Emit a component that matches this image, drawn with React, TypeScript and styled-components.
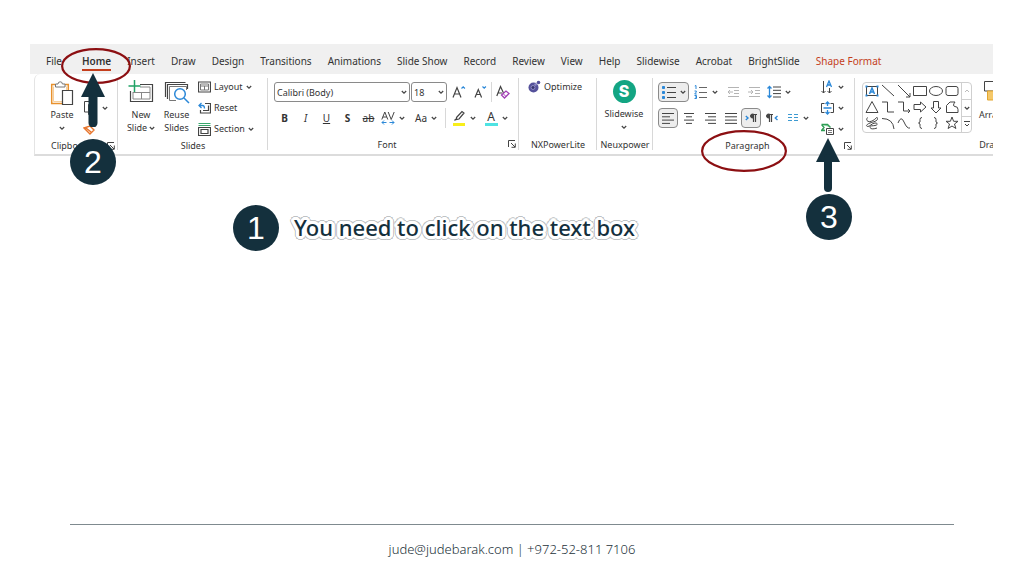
import React from "react";
import styled, { createGlobalStyle, css } from "styled-components";

const INK = "#444444";
const BLUE = "#2b88d8";
const NAVY = "#14303d";

const GlobalStyle = createGlobalStyle`
  *, *::before, *::after { box-sizing: border-box; }
  body {
    margin: 0;
    background: #ffffff;
    color: #333333;
    font-family: "Noto Sans", "Open Sans", sans-serif;
    font-size: 9px;
  }
  button, select { font: inherit; color: inherit; }
  svg { display: block; flex: none; }
`;

const Slide = styled.div`
  display: flex;
  flex-direction: column;
  min-height: 100vh;
  padding: 44px 0 16px;
`;

const Ribbon = styled.section`
  position: relative;
  margin: 0 31px 0 30px;
`;

const TabBar = styled.nav`
  display: flex;
  align-items: center;
  gap: 16px;
  height: 30px;
  padding: 4px 16px 0;
  background: #f0f0f0;
  overflow: hidden;
`;

const Tab = styled.button<{ $active?: boolean; $accent?: boolean }>`
  flex: none;
  height: 20px;
  padding: 2px 0 0;
  border: 0;
  border-bottom: 2px solid ${(p) => (p.$active ? "#c43e1c" : "transparent")};
  background: none;
  font-size: 10px;
  line-height: 16px;
  white-space: nowrap;
  color: ${(p) => (p.$accent ? "#c43e1c" : "#333333")};
  ${(p) =>
    p.$active &&
    css`
      margin-left: 4px;
      font-weight: 600;
    `}
`;

const Panel = styled.div`
  display: flex;
  height: 82px;
  margin-left: 4px;
  border: 1px solid #e4e4e4;
  border-width: 0 0 2px 1px;
  border-bottom-color: #dcdcdc;
  border-radius: 6px 0 0 0;
  background: #ffffff;
  overflow: hidden;
`;

const GroupBox = styled.div<{ $width: number }>`
  display: flex;
  flex: none;
  flex-direction: column;
  justify-content: space-between;
  width: ${(p) => p.$width}px;
  padding-bottom: 2px;
  position: relative;
  &:not(:last-child)::after {
    content: "";
    position: absolute;
    right: 0;
    top: 4px;
    bottom: 4px;
    width: 1px;
    background: #d8d8d8;
  }
`;

const GroupContent = styled.div<{ $pad?: number }>`
  display: flex;
  align-items: flex-start;
  padding: 2px 0 0 ${(p) => p.$pad ?? 0}px;
`;

const GroupFooter = styled.div<{ $start?: boolean }>`
  display: flex;
  align-items: center;
  height: 16px;
  padding-left: ${(p) => (p.$start ? 16 : 0)}px;
  span {
    flex: 1;
    text-align: ${(p) => (p.$start ? "left" : "center")};
    white-space: nowrap;
  }
`;

const Launcher = styled.button`
  width: 12px;
  height: 12px;
  margin-right: 1px;
  padding: 2px;
  border: 0;
  background: none;
`;

const Column = styled.div<{ $width?: number; $indent?: number }>`
  display: flex;
  flex: none;
  flex-direction: column;
  width: ${(p) => (p.$width ? p.$width + "px" : "auto")};
  padding-left: ${(p) => p.$indent ?? 0}px;
`;

const TwoRows = styled.div`
  display: flex;
  flex-direction: column;
  gap: 6px;
  padding-top: 6px;
`;

const ToolRow = styled.div<{ $gap?: number }>`
  display: flex;
  align-items: center;
  gap: ${(p) => p.$gap ?? 0}px;
  height: 20px;
`;

const BigButton = styled.button<{ $width: number }>`
  display: flex;
  flex: none;
  flex-direction: column;
  align-items: center;
  gap: 2px;
  width: ${(p) => p.$width}px;
  padding: 4px 0 0;
  border: 0;
  background: none;
  line-height: 13px;
  white-space: nowrap;
`;

const BigLabel = styled.span`
  display: flex;
  flex-direction: column;
  align-items: center;
`;

const Inline = styled.span`
  display: flex;
  align-items: center;
  gap: 2px;
  min-height: 13px;
`;

const TextTool = styled.button`
  display: flex;
  align-items: center;
  gap: 3px;
  height: 21px;
  padding: 0;
  border: 0;
  background: none;
  white-space: nowrap;
`;

const StackItem = styled.div`
  display: flex;
  align-items: center;
  height: 21px;
`;

const Tool = styled.button<{ $width?: number; $on?: boolean }>`
  display: flex;
  flex: none;
  align-items: center;
  justify-content: center;
  gap: 4px;
  width: ${(p) => p.$width ?? 21}px;
  height: 20px;
  padding: 0;
  border: 1px solid ${(p) => (p.$on ? "#8a8a8a" : "transparent")};
  border-radius: 4px;
  background: ${(p) => (p.$on ? "#ededed" : "none")};
  font-size: 10px;
`;

const Divider = styled.span`
  width: 1px;
  height: 20px;
  background: #d8d8d8;
`;

const Combo = styled.label<{ $width: number }>`
  position: relative;
  display: block;
  width: ${(p) => p.$width}px;
  height: 20px;
  select {
    width: 100%;
    height: 20px;
    padding: 0 2px;
    border: 1px solid #8a8a8a;
    border-radius: 3px;
    background: #ffffff;
    appearance: none;
  }
  svg {
    position: absolute;
    right: 3px;
    top: 7px;
    pointer-events: none;
  }
`;

const Gallery = styled.div`
  display: flex;
  width: 110px;
  height: 51px;
  margin-top: 6px;
  border: 1px solid #cfcfcf;
  border-radius: 4px;
`;

const ShapeGrid = styled.div`
  display: grid;
  grid-template-columns: repeat(6, 16px);
  grid-template-rows: repeat(3, 16px);
  padding: 0 1px;
  flex: 1;
`;

const ShapeCell = styled.button`
  display: grid;
  place-items: center;
  padding: 0;
  border: 0;
  background: none;
`;

const GalleryScroll = styled.div`
  display: grid;
  grid-template-rows: repeat(3, 1fr);
  width: 11px;
  border-left: 1px solid #cfcfcf;
  button {
    display: grid;
    place-items: center;
    padding: 0;
    border: 0;
    background: none;
  }
  button + button { border-top: 1px solid #cfcfcf; }
`;

const Mark = styled.div<{ $x: number; $y: number }>`
  position: absolute;
  left: ${(p) => p.$x}px;
  top: ${(p) => p.$y}px;
  pointer-events: none;
`;

const NumberBadge = styled.span`
  display: grid;
  flex: none;
  place-items: center;
  width: 46px;
  height: 46px;
  border-radius: 50%;
  background: ${NAVY};
  color: #ffffff;
  font: 32px/46px "Liberation Sans", Arial, sans-serif;
`;

const Step = styled.div`
  display: flex;
  align-items: center;
  gap: 15px;
  margin: 49px 0 0 233px;
`;

const ring = (color: string, points: number[][]) =>
  points
    .flatMap(([x, y]) => [
      [x, y],
      [-x, y],
      [x, -y],
      [-x, -y],
    ])
    .map(([x, y]) => `${x}px ${y}px 0 ${color}`)
    .join(", ");

const StepText = styled.p`
  margin: 0;
  padding-bottom: 2px;
  font-family: "Noto Sans", "Open Sans", sans-serif;
  font-size: 22px;
  font-weight: 500;
  line-height: 30px;
  color: ${NAVY};
  white-space: nowrap;
  text-shadow:
    ${ring("#ffffff", [[1, 1], [2, 0], [0, 2], [3, 0], [0, 3], [2, 2], [3, 1], [1, 3]])},
    ${ring("#bfc3c5", [[4, 0], [0, 4], [3, 3], [4, 1], [1, 4], [2, 3], [3, 2]])};
`;

const Footer = styled.footer`
  margin: auto 70px 0;
  padding-top: 14px;
  border-top: 1px solid #7f8a8f;
  text-align: center;
  font-family: "Noto Sans", "Open Sans", sans-serif;
  font-size: 13px;
  font-weight: 300;
  line-height: 21px;
  color: #24323a;
`;

const Chevron = ({ color = INK }: { color?: string }) => (
  <svg width="6" height="6" viewBox="0 0 6 6" fill="none" stroke={color} strokeWidth="1.2">
    <path d="M.8 2 3 4.2 5.2 2" />
  </svg>
);

const Icon = ({ w = 14, h = 14, children }: { w?: number; h?: number; children: React.ReactNode }) => (
  <svg width={w} height={h} viewBox={`0 0 ${w} ${h}`} fill="none" stroke={INK} strokeWidth="1">
    {children}
  </svg>
);

const PasteIcon = () => (
  <Icon w={24} h={26}>
    <path d="M5 4.5H1.7v19H12M15 4.5h3.3V10" stroke="#e8912d" strokeWidth="1.5" />
    <path d="M3.5 6.5v15H12M16.5 6.5V10" stroke="#f6cf9c" />
    <path d="M5.5 7V4H8a2.200 2.200 0 0 1 4.400 0h2.600v3z" fill="#fff" stroke="#777" />
    <path d="M12.5 10.5h10v14h-10z" fill="#fff" strokeWidth="1.2" />
  </Icon>
);

const NewSlideIcon = () => (
  <Icon w={26} h={26}>
    <path d="M12 4.5h12.5v17h-22V11" strokeWidth="1.2" />
    <path d="M12 7h10v12H5v-7M5 12.5h17M13.5 12.5V19" stroke="#888" />
    <path d="M6.5 0v12M.5 6h12" stroke="#21a366" strokeWidth="1.5" />
  </Icon>
);

const ReuseIcon = () => (
  <Icon w={26} h={26}>
    <path d="M1.5 17V2.5h20M3.5 19V4.5h20V9" strokeWidth="1.2" />
    <path d="M12 20.5H5.5v-14h17V10" stroke="#777" />
    <circle cx="16" cy="14" r="5.3" stroke={BLUE} strokeWidth="1.5" fill="#fff" />
    <path d="m20 18 5 5" stroke={BLUE} strokeWidth="1.5" />
  </Icon>
);

const LayoutIcon = () => (
  <Icon w={13} h={12}>
    <path d="M.5 1h12v10H.5z" strokeWidth="1.2" />
    <path d="M2.5 3h8v2h-8zM2.5 5v4h8V5M6.5 5v4" stroke="#777" />
  </Icon>
);

const ResetIcon = () => (
  <Icon w={13} h={12}>
    <path d="M7 1.5h5.5v9.500H2.500V8M5 8.500h5.500v-5" strokeWidth="1.2" />
    <path d="M1 3.500h3.500q2 0 2 3M3.500 1 1 3.500 3.500 6" stroke={BLUE} strokeWidth="1.3" />
  </Icon>
);

const SectionIcon = () => (
  <Icon w={13} h={14}>
    <path d="M.5 1.500h12M.5 3.500h12" stroke="#3aa76d" />
    <path d="M.5 5.500h12v8H.5zM3 7.500h7v4H3z" strokeWidth="1.2" />
  </Icon>
);

const LauncherIcon = () => (
  <Icon w={8} h={8}>
    <path d="M.5 7V.5H7M3 3l4 4M7.300 3.500v3.800H3.500" />
  </Icon>
);

const Lines = ({ rows }: { rows: number[][] }) => (
  <Icon w={14} h={13}>
    {rows.map(([x1, x2], i) => (
      <path key={i} d={`M${x1} ${1.5 + i * 3.3}H${x2}`} />
    ))}
  </Icon>
);

const BulletsIcon = () => (
  <Icon>
    <path d="M5 2.500h9M5 7.500h9M5 12.500h9" />
    <path d="M.5 1.500h2v2h-2zM.5 6.500h2v2h-2zM.5 11.500h2v2h-2z" fill={BLUE} stroke={BLUE} />
  </Icon>
);

const NumberingIcon = () => (
  <Icon>
    <path d="M5 2.500h8M5 7.500h8M5 12.500h8" stroke="#666" />
    <path d="M.8 1 2 .5v3.500M.5 6h1.800v1L.7 9h2M.5 10.500h2v3h-2M1 12h1.500" stroke={BLUE} />
  </Icon>
);

const IndentIcon = ({ flip }: { flip?: boolean }) => (
  <Icon w={13} h={12}>
    <g stroke="#b4b4b4">
      <path d="M1 1.500h11M7 4.500h5M7 7.500h5M1 10.500h11" />
      <path d={flip ? "M0 6h5M3 4l2 2-2 2" : "M6 6H1M3 4 1 6l2 2"} />
    </g>
  </Icon>
);

const SpacingIcon = () => (
  <Icon>
    <path d="M6 2h8M6 5.300h8M6 8.600h8M6 12h8" />
    <path d="M2.500 1.500v11M.5 3.500l2-2 2 2M.5 10.500l2 2 2-2" stroke={BLUE} strokeWidth="1.3" />
  </Icon>
);

const PilcrowIcon = ({ rtl }: { rtl?: boolean }) => (
  <Icon w={12} h={10}>
    <g transform={rtl ? "translate(-5 0)" : undefined}>
      <path d="M8 1.500h4M8.500 1v8M10.500 1v8" strokeWidth="1.2" />
      <path d="M8.500 1H7.500a2 2 0 0 0 0 4h1z" fill={INK} />
    </g>
    <path d={rtl ? "M11.500 3 9.300 5l2.200 2" : "M.8 3 3 5 .8 7"} stroke={BLUE} strokeWidth="1.4" />
  </Icon>
);

const ColumnsIcon = () => (
  <Icon w={12} h={10}>
    <path d="M1 1.500h4M1 4.500h4M1 7.500h4M7 1.500h4M7 4.500h4M7 7.500h4" stroke="#3d9ad1" />
  </Icon>
);

const DirectionIcon = () => (
  <Icon w={13}>
    <path d="M2.500 1v12M.5 11l2 2 2-2M8.500 8v5M6.500 11l2 2 2-2" />
    <path d="m5.500 7 2.500-6 2.500 6M6.500 5h3" stroke={BLUE} strokeWidth="1.3" />
  </Icon>
);

const AlignTextIcon = () => (
  <Icon w={13}>
    <path d="M3.500 2.500H.5v9h3M9.500 2.500h3v9h-3" />
    <path d="M2.500 7h8M6.500 1v4M6.500 9v4M4.500 3l2-2 2 2M4.500 11l2 2 2-2" stroke={BLUE} strokeWidth="1.3" />
  </Icon>
);

const SmartArtIcon = () => (
  <Icon w={13}>
    <path d="M.5 2.500h6l3 3M.5 2.500 3 5.500.5 8.500H4" stroke="#2f9e55" strokeWidth="1.4" fill="#9bd6ae" />
    <path d="M5.500 6.500h7v6h-7z" fill="#fff" />
    <path d="M7 8.500h4M7 10.500h4" stroke="#777" />
  </Icon>
);

const OptimizeIcon = () => (
  <Icon w={13} h={13}>
    <circle cx="5.5" cy="7.5" r="5" fill="#55519b" stroke="none" />
    <circle cx="5" cy="7.5" r="2" fill="#37346f" stroke="#8f8cc4" />
    <circle cx="10.5" cy="2.5" r="1.8" fill="#55519b" stroke="none" />
    <circle cx="7.5" cy="4.5" r="1.2" fill="#8f8cc4" stroke="none" />
  </Icon>
);

const SlidewiseBadge = styled.span`
  display: grid;
  place-items: center;
  width: 23px;
  height: 23px;
  margin-bottom: 2px;
  border-radius: 50%;
  background: #13a583;
  color: #ffffff;
  font: 800 16px/23px Inter, "Open Sans", sans-serif;
`;

const Glyph = styled.span<{ $strike?: boolean; $weight?: number }>`
  font-size: 10px;
  font-weight: ${(p) => p.$weight ?? 400};
  line-height: 14px;
  text-decoration: ${(p) => (p.$strike ? "line-through" : "none")};
`;

const Underlined = styled(Glyph)`
  text-decoration: underline;
`;

const Underbar = styled.span<{ $color: string }>`
  display: flex;
  justify-content: center;
  width: 13px;
  height: 16px;
  border-bottom: 3px solid ${(p) => p.$color};
  font-size: 12px;
  line-height: 13px;
`;

const SizeGlyph = ({ up }: { up?: boolean }) => (
  <Icon w={14} h={14}>
    {up ? (
      <path d="m1 12.500 4-10 4 10M2.500 9h5" strokeWidth="1.2" />
    ) : (
      <path d="m2 12.500 3.300-8 3.300 8M3.200 9.500h4.200" strokeWidth="1.2" />
    )}
    <path d={up ? "m9.500 3.500 1.700-1.700 1.700 1.700" : "m9.500 1.500 1.700 1.700 1.700-1.700"} stroke={BLUE} strokeWidth="1.2" />
  </Icon>
);

const ClearIcon = () => (
  <Icon w={14} h={14}>
    <path d="M.8 11 4.500 1.500 7.500 8M2.200 8H6" strokeWidth="1.2" />
    <path d="m5.500 10 4.500-4 3 2.500-4.500 4.500z" fill="#fff" stroke="#a33fb5" strokeWidth="1.3" />
    <path d="m7 8.500 3 3" stroke="#a33fb5" />
  </Icon>
);

const SpacingGlyph = () => (
  <Icon w={14} h={14}>
    <path d="m.8 8.500 3-7.500 3 7.500M1.800 6h4M7.200 1l3 7.500 3-7.500" />
    <path d="M1 11.500h4.500M3 9.500l-2 2 2 2M8.500 11.500H13M11 9.500l2 2-2 2" stroke={BLUE} />
  </Icon>
);

const PenIcon = () => (
  <Icon w={14} h={16}>
    <path d="M4.500 7.500 10 1.500l2 1.500-5 6-2.500.5zM4 9l-1.500 1.500" strokeWidth="1.2" />
    <path d="M1 14.500h12" stroke="#f8ee1a" strokeWidth="3" />
  </Icon>
);

const shapes: { name: string; art: React.ReactNode }[] = [
  {
    name: "Text box",
    art: (
      <>
        <path d="M1.500 2.500h11v9h-11z" />
        <path d="m4.500 10 2.500-6 2.500 6M5.500 8h3" stroke={BLUE} strokeWidth="1.5" />
        <path d="M.5 1.500h2v2h-2zM11.500 1.500h2v2h-2zM.5 10.500h2v2h-2zM11.500 10.500h2v2h-2z" fill={BLUE} stroke="none" />
      </>
    ),
  },
  { name: "Line", art: <path d="m1 1 12 11" /> },
  { name: "Arrow", art: <path d="m1 1 12 12M13 9v4H9" /> },
  { name: "Rectangle", art: <path d="M.5 2.500h13v9H.5z" /> },
  { name: "Oval", art: <ellipse cx="7" cy="7" rx="6.5" ry="4.5" /> },
  { name: "Rounded rectangle", art: <rect x="1" y="2.5" width="12" height="9" rx="2" /> },
  { name: "Triangle", art: <path d="m7 1.500 6 11H1z" /> },
  { name: "Elbow connector", art: <path d="M1 2h5.500v10H13" /> },
  { name: "Elbow arrow", art: <path d="M1 2h5.500v9H13M11 9l2 2-2 2" /> },
  { name: "Right arrow", art: <path d="M1 4.500h6.500V2l5.500 5-5.500 5V9.500H1z" /> },
  { name: "Down arrow", art: <path d="M4.500 1.500h5V8H12l-5 5-5-5h2.500z" /> },
  { name: "Freeform", art: <path d="M1.500 5.500 5 2h5Q7 6 10 6.500q3 0 3 3v3H1.500z" /> },
  { name: "Scribble", art: <path d="M2.500 1.500C0 5 4 7 8 4.500S12 0 12.500 2.500 8 6 5 7 .5 10 2.500 10.500 7 7 10 7s3 2 0 2.500-6 0-5 2 4 1.500 7 .5" /> },
  { name: "Curve", art: <path d="M1 2.500q11 0 12 10.500" /> },
  { name: "Curved line", art: <path d="M1 7q3-8 6-1t6 6" /> },
  { name: "Left brace", art: <path d="M9 1.500q-2 0-2 2V6L5.500 7 7 8v2.500q0 2 2 2" /> },
  { name: "Right brace", art: <path d="M5 1.500q2 0 2 2V6l1.500 1L7 8v2.500q0 2-2 2" /> },
  { name: "Star", art: <path d="m7 1 1.600 4.300H13L9.500 8l1.400 4.500L7 10l-3.900 2.500L4.500 8 1 5.300h4.400z" /> },
];

const tabs = [
  "File", "Home", "Insert", "Draw", "Design", "Transitions", "Animations", "Slide Show", "Record",
  "Review", "View", "Help", "Slidewise", "Acrobat", "BrightSlide", "Shape Format",
];

type GroupProps = {
  label: string;
  width: number;
  pad?: number;
  launcher?: boolean;
  start?: boolean;
  children: React.ReactNode;
};

const Group = ({ label, width, pad, launcher, start, children }: GroupProps) => (
  <GroupBox $width={width} role="group" aria-label={label}>
    <GroupContent $pad={pad}>{children}</GroupContent>
    <GroupFooter $start={start}>
      <span>{label}</span>
      {launcher && (
        <Launcher aria-label={`${label} options`}>
          <LauncherIcon />
        </Launcher>
      )}
    </GroupFooter>
  </GroupBox>
);

const Ellipse = ({ w, h }: { w: number; h: number }) => (
  <svg width={w} height={h} viewBox={`0 0 ${w} ${h}`} fill="none" stroke="#8c0f12" strokeWidth="2.2">
    <ellipse cx={w / 2} cy={h / 2} rx={w / 2 - 1.1} ry={h / 2 - 1.1} />
  </svg>
);

const UpArrow = ({ shaft }: { shaft: number }) => (
  <svg width="24" height="54" viewBox="0 0 24 54" fill={NAVY}>
    <path d="M12 0 24 24H0z" />
    <path d="M12 20v30" stroke={NAVY} strokeWidth={shaft} strokeLinecap="round" />
  </svg>
);

export default function App() {
  return (
    <Slide>
      <GlobalStyle />
      <Ribbon>
        <TabBar>
          {tabs.map((name) => (
            <Tab key={name} $active={name === "Home"} $accent={name === "Shape Format"}>
              {name}
            </Tab>
          ))}
        </TabBar>
        <Panel>
          <Group label="Clipboard" width={83} pad={10} launcher start>
            <BigButton $width={34}>
              <PasteIcon />
              <BigLabel>
                Paste
                <Inline><Chevron /></Inline>
              </BigLabel>
            </BigButton>
            <Column $width={32}>
              <StackItem />
              <StackItem>
                <Tool $width={34} aria-label="Copy">
                  <Icon w={14} h={14}><path d="M4 11H.5V.5H7M4.500 3.500h8v10h-8z" /></Icon>
                  <Chevron />
                </Tool>
              </StackItem>
              <StackItem>
                <Tool $width={20} aria-label="Format painter">
                  <Icon w={12} h={12}>
                    <path d="m1 5 6-2 4 4-4 4zM3 5l5 4" stroke="#e8762d" strokeWidth="1.4" />
                  </Icon>
                </Tool>
              </StackItem>
            </Column>
          </Group>

          <Group label="Slides" width={150} pad={5}>
            <BigButton $width={36}>
              <NewSlideIcon />
              <BigLabel>
                New
                <Inline>Slide <Chevron /></Inline>
              </BigLabel>
            </BigButton>
            <BigButton $width={35}>
              <ReuseIcon />
              <BigLabel>
                <span>Reuse</span>
                <span>Slides</span>
              </BigLabel>
            </BigButton>
            <Column $width={70} $indent={4}>
              <TextTool><LayoutIcon />Layout <Chevron /></TextTool>
              <TextTool><ResetIcon />Reset</TextTool>
              <TextTool><SectionIcon />Section <Chevron /></TextTool>
            </Column>
          </Group>

          <Group label="Font" width={251} pad={6} launcher>
            <TwoRows>
              <ToolRow $gap={1}>
                <Combo $width={136}>
                  <select aria-label="Font name"><option>Calibri (Body)</option></select>
                  <Chevron />
                </Combo>
                <Combo $width={36}>
                  <select aria-label="Font size"><option>18</option></select>
                  <Chevron />
                </Combo>
                <Tool aria-label="Grow font"><SizeGlyph up /></Tool>
                <Tool $width={20} aria-label="Shrink font"><SizeGlyph /></Tool>
                <Divider />
                <Tool $width={20} aria-label="Clear formatting"><ClearIcon /></Tool>
              </ToolRow>
              <ToolRow $gap={5}>
                <ToolRow>
                  <Tool><Glyph as="b" $weight={700}>B</Glyph></Tool>
                  <Tool><Glyph as="i">I</Glyph></Tool>
                  <Tool><Underlined>U</Underlined></Tool>
                  <Tool><Glyph $weight={700}>S</Glyph></Tool>
                  <Tool><Glyph $strike>ab</Glyph></Tool>
                  <Tool $width={28} aria-label="Character spacing"><SpacingGlyph /><Chevron /></Tool>
                </ToolRow>
                <Tool $width={28}><Glyph>Aa</Glyph><Chevron /></Tool>
                <Divider />
                <Tool $width={26} aria-label="Highlight"><PenIcon /><Chevron /></Tool>
                <Tool $width={28}><Underbar $color="#4fe3e3">A</Underbar><Chevron /></Tool>
              </ToolRow>
            </TwoRows>
          </Group>

          <Group label="NXPowerLite" width={78} pad={9}>
            <TextTool><OptimizeIcon />Optimize</TextTool>
          </Group>

          <Group label="Neuxpower" width={56}>
            <BigButton $width={54}>
              <SlidewiseBadge>S</SlidewiseBadge>
              <BigLabel>
                Slidewise
                <Inline><Chevron /></Inline>
              </BigLabel>
            </BigButton>
          </Group>

          <Group label="Paragraph" width={202} pad={5} launcher>
            <TwoRows>
              <ToolRow>
                <Tool $width={31} $on aria-label="Bullets"><BulletsIcon /><Chevron /></Tool>
                <Tool $width={34} aria-label="Numbering"><NumberingIcon /><Chevron /></Tool>
                <Tool aria-label="Decrease indent"><IndentIcon /></Tool>
                <Tool aria-label="Increase indent"><IndentIcon flip /></Tool>
                <Tool $width={28} aria-label="Line spacing"><SpacingIcon /><Chevron /></Tool>
              </ToolRow>
              <ToolRow>
                <Tool $width={20} $on aria-label="Align left"><Lines rows={[[1, 13], [1, 9], [1, 13], [1, 9]]} /></Tool>
                <Tool aria-label="Center"><Lines rows={[[2, 12], [4, 10], [2, 12], [4, 10]]} /></Tool>
                <Tool aria-label="Align right"><Lines rows={[[2, 13], [5, 13], [2, 13], [5, 13]]} /></Tool>
                <Tool aria-label="Justify"><Lines rows={[[1, 13], [1, 13], [1, 13], [1, 13]]} /></Tool>
                <Tool $width={20} $on aria-label="Left to right"><PilcrowIcon /></Tool>
                <Tool aria-label="Right to left"><PilcrowIcon rtl /></Tool>
                <Tool $width={32} aria-label="Columns"><ColumnsIcon /><Chevron /></Tool>
              </ToolRow>
            </TwoRows>
            <Column $width={36}>
              <StackItem><Tool $width={36} aria-label="Text direction"><DirectionIcon /><Chevron /></Tool></StackItem>
              <StackItem><Tool $width={36} aria-label="Align text"><AlignTextIcon /><Chevron /></Tool></StackItem>
              <StackItem><Tool $width={36} aria-label="Convert to SmartArt"><SmartArtIcon /><Chevron /></Tool></StackItem>
            </Column>
          </Group>

          <Group label="Drawing" width={284} pad={7}>
            <Gallery>
              <ShapeGrid>
                {shapes.map((s) => (
                  <ShapeCell key={s.name} aria-label={s.name}>
                    <Icon>{s.art}</Icon>
                  </ShapeCell>
                ))}
              </ShapeGrid>
              <GalleryScroll>
                <button aria-label="Scroll up">
                  <svg width="6" height="6" viewBox="0 0 6 6" fill="none" stroke="#bbb"><path d="M1 4 3 2l2 2" /></svg>
                </button>
                <button aria-label="Scroll down"><Chevron /></button>
                <button aria-label="More shapes">
                  <svg width="6" height="8" viewBox="0 0 6 8" fill="none" stroke={INK}><path d="M0 1.500h6M1 4l2 2 2-2" /></svg>
                </button>
              </GalleryScroll>
            </Gallery>
            <BigButton $width={48}>
              <Icon w={26} h={26}>
                <path d="M1.500 11V1.500h13V11z" />
                <path d="M4.500 11h14v9h-14z" fill="#f5c869" stroke="#e3a62f" />
              </Icon>
              <BigLabel>
                Arrange
                <Inline><Chevron /></Inline>
              </BigLabel>
            </BigButton>
          </Group>
        </Panel>
        <Mark $x={31} $y={4}><Ellipse w={70} h={36} /></Mark>
        <Mark $x={51} $y={29}><UpArrow shaft={9} /></Mark>
        <Mark $x={40} $y={95}><NumberBadge>2</NumberBadge></Mark>
        <Mark $x={671} $y={86}><Ellipse w={86} h={42} /></Mark>
        <Mark $x={786} $y={94}><UpArrow shaft={8} /></Mark>
        <Mark $x={776} $y={150}><NumberBadge>3</NumberBadge></Mark>
      </Ribbon>
      <Step>
        <NumberBadge>1</NumberBadge>
        <StepText>You need to click on the text box</StepText>
      </Step>
      <Footer>jude@judebarak.com | +972-52-811 7106</Footer>
    </Slide>
  );
}
